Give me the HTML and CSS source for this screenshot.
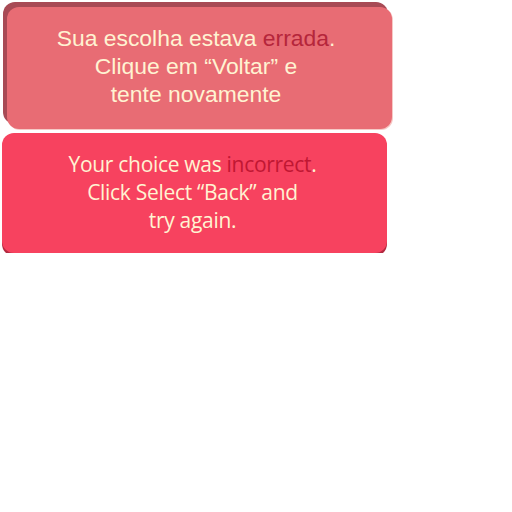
FILE: index.html
```html
<!DOCTYPE html>
<html>
<head>
<meta charset="utf-8">
<link rel="stylesheet" href="styles.css">
</head>
<body>
<div class="card card-pt">
  <p class="msg">Sua escolha estava <span class="err">errada</span>.<br>Clique em “Voltar” e<br>tente novamente</p>
</div>
<div class="card card-en">
  <p class="msg">Your choice was <span class="err">incorrect</span>.<br>Click Select “Back” and<br>try again.</p>
</div>
</body>
</html>
```

FILE: styles.css
```css
html, body {
  margin: 0;
  padding: 0;
  background: #ffffff;
}
.card {
  box-sizing: border-box;
  border-radius: 12px;
  display: flex;
  justify-content: center;
}
.msg {
  margin: 0;
  text-align: center;
  color: #fff3d2;
  line-height: 28px;
}
.card-pt {
  margin: 7px 0 0 7px;
  width: 385px;
  height: 122px;
  background: #e86c74;
  box-shadow: -4px -5px 0 #a84a55, 1px 1px 0 #f6c9c6;
  padding: 17px 7px 0 0;
}
.card-pt .msg {
  font-family: "Liberation Sans", Arial, sans-serif;
  font-size: 22.9px;
}
.card-pt .err {
  color: #b5263b;
}
.card-en {
  margin: 4px 0 0 2px;
  width: 385px;
  height: 120px;
  background: #f7425f;
  box-shadow: 0 3px 0 #b32a40;
  padding: 17px 4px 0 0;
}
.card-en .msg {
  font-family: "Open Sans", sans-serif;
  font-size: 21px;
  letter-spacing: -0.3px;
}
.card-en .err {
  color: #c01733;
}
```
